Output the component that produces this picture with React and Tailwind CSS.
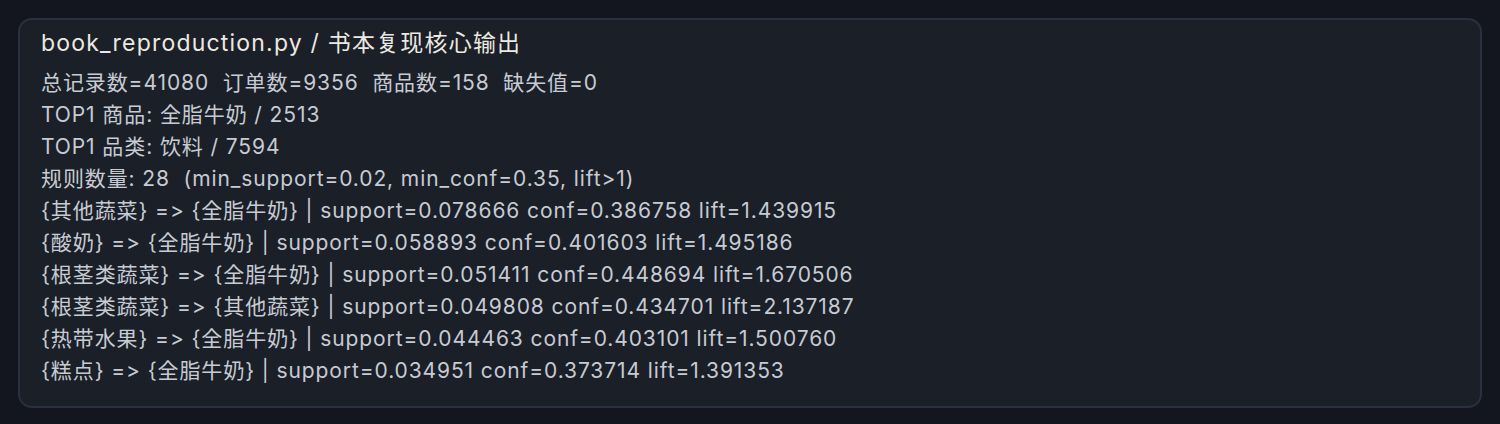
import React from 'react';

const lines = [
  "总记录数=41080  订单数=9356  商品数=158  缺失值=0",
  "TOP1 商品: 全脂牛奶 / 2513",
  "TOP1 品类: 饮料 / 7594",
  "规则数量: 28  (min_support=0.02, min_conf=0.35, lift>1)",
  "{其他蔬菜} => {全脂牛奶} | support=0.078666 conf=0.386758 lift=1.439915",
  "{酸奶} => {全脂牛奶} | support=0.058893 conf=0.401603 lift=1.495186",
  "{根茎类蔬菜} => {全脂牛奶} | support=0.051411 conf=0.448694 lift=1.670506",
  "{根茎类蔬菜} => {其他蔬菜} | support=0.049808 conf=0.434701 lift=2.137187",
  "{热带水果} => {全脂牛奶} | support=0.044463 conf=0.403101 lift=1.500760",
  "{糕点} => {全脂牛奶} | support=0.034951 conf=0.373714 lift=1.391353",
];

export default function App() {
  return (
    <div className="min-h-screen bg-[#13161e] pt-[18px] px-[18px] font-['Inter','Noto_Sans_CJK_JP',sans-serif] [font-feature-settings:'calt'_0,'liga'_0]">
      <div className="rounded-[14px] border-2 border-[#2a3040] bg-[#1b1f27] px-[21px] pt-[7px] pb-[19px]">
        <div className="text-[23px] leading-[32px] tracking-[1.2px] text-[#ece9e2]">
          book_reproduction.py / 书本复现核心输出
        </div>
        <div className="mt-[8px] text-[21px] leading-[32px] tracking-[0.9px] text-[#c6cbd4] whitespace-pre">
          {lines.map((l, i) => (
            <div key={i}>{l}</div>
          ))}
        </div>
      </div>
    </div>
  );
}
